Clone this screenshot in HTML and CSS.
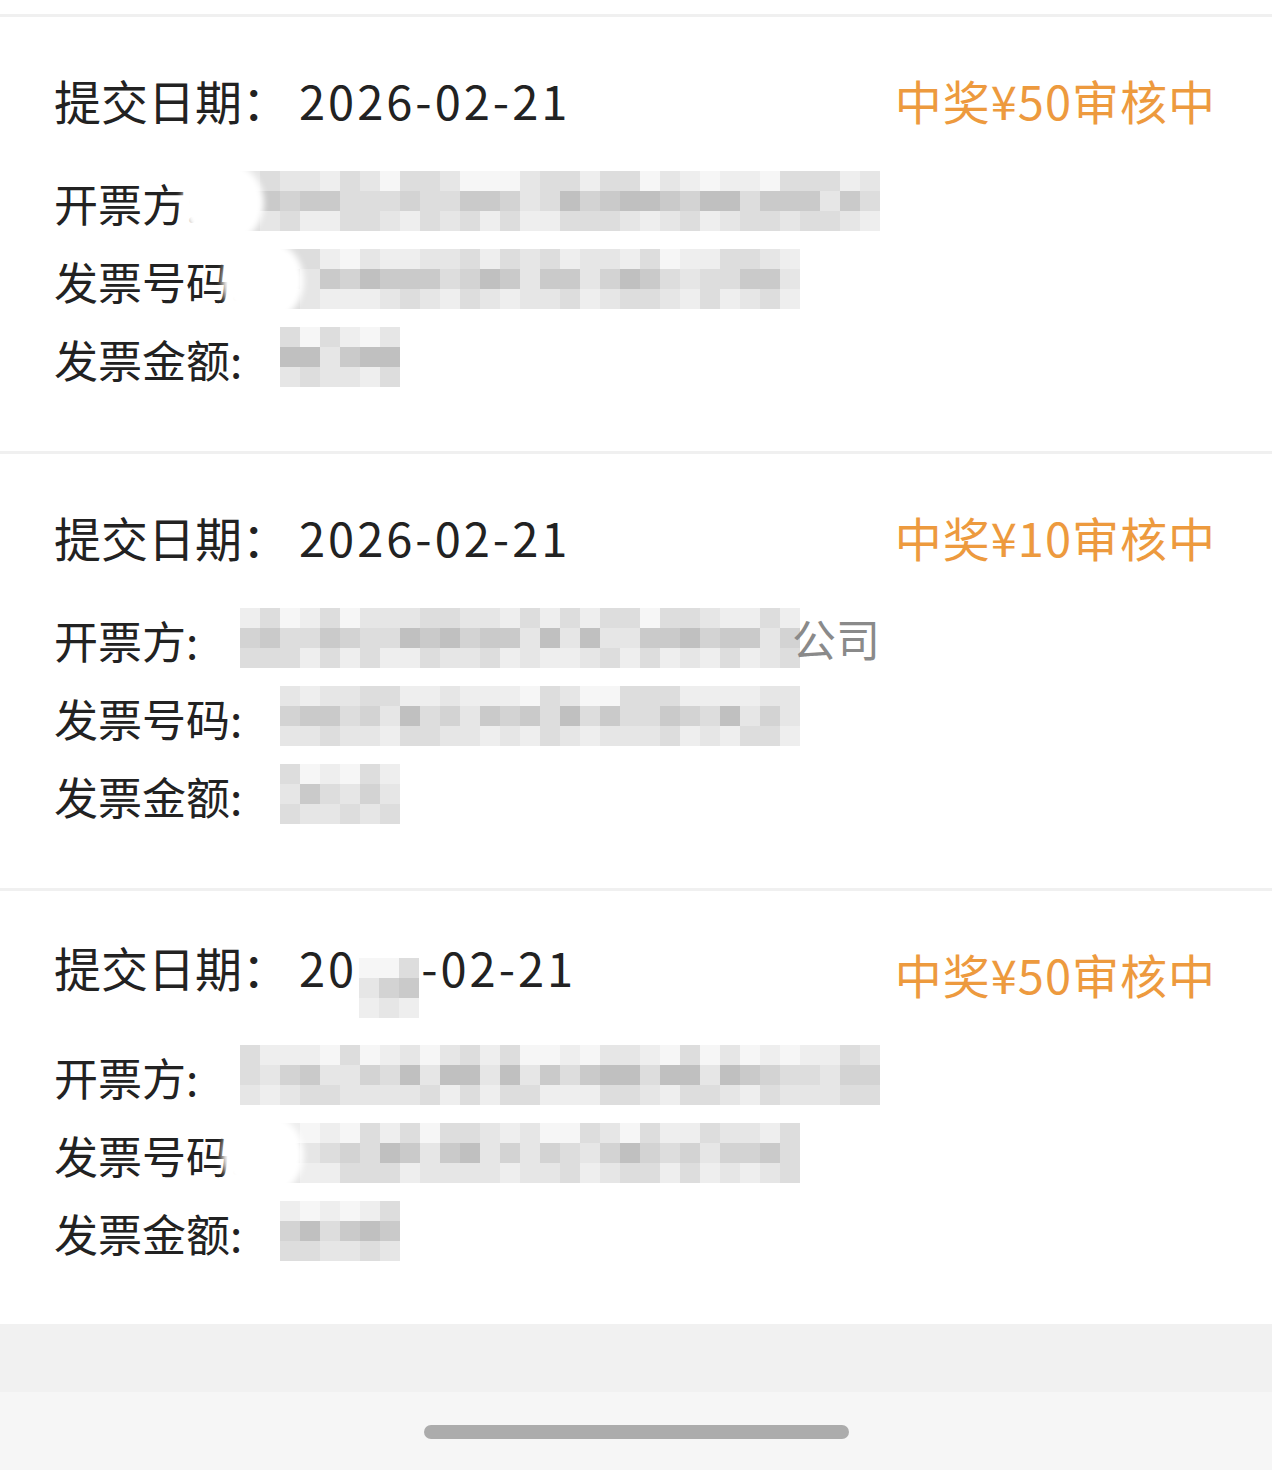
FILE: index.html
```html
<!DOCTYPE html>
<html lang="zh-CN">
<head>
  <meta charset="utf-8">
  <meta name="viewport" content="width=device-width">
  <title>我的发票</title>
  <link rel="stylesheet" href="styles.css">
</head>
<body>
  <div class="top-gap"></div>

  <div class="record">
    <div class="record-head">
      <span class="record-date">提交日期：<span class="num">2026-02-21</span></span>
      <span class="record-status">中奖¥50审核中</span>
    </div>
    <ul class="record-info">
      <li><span class="label">开票方:</span><span class="value wide"><i class="smear"></i><b class="mosaic" data-cols="32" data-seed="3"></b></span></li>
      <li><span class="label">发票号码:</span><span class="value"><i class="smear"></i><b class="mosaic" data-cols="26" data-seed="7"></b></span></li>
      <li><span class="label">发票金额:</span><span class="value"><b class="mosaic" data-cols="6" data-seed="11"></b></span></li>
    </ul>
  </div>

  <div class="record">
    <div class="record-head">
      <span class="record-date">提交日期：<span class="num">2026-02-21</span></span>
      <span class="record-status">中奖¥10审核中</span>
    </div>
    <ul class="record-info">
      <li><span class="label">开票方:</span><span class="value wide"><b class="mosaic" data-cols="28" data-seed="5"></b><span class="tail">公司</span></span></li>
      <li><span class="label">发票号码:</span><span class="value"><b class="mosaic" data-cols="26" data-seed="13"></b></span></li>
      <li><span class="label">发票金额:</span><span class="value"><b class="mosaic" data-cols="6" data-seed="17"></b></span></li>
    </ul>
  </div>

  <div class="record last">
    <div class="record-head">
      <span class="record-date">提交日期：<span class="num">20<b class="mosaic small" data-cols="3" data-seed="19"></b>-02-21</span></span>
      <span class="record-status">中奖¥50审核中</span>
    </div>
    <ul class="record-info">
      <li><span class="label">开票方:</span><span class="value wide"><b class="mosaic" data-cols="32" data-seed="23"></b></span></li>
      <li><span class="label">发票号码:</span><span class="value"><i class="smear"></i><b class="mosaic" data-cols="26" data-seed="29"></b></span></li>
      <li><span class="label">发票金额:</span><span class="value"><b class="mosaic" data-cols="6" data-seed="31"></b></span></li>
    </ul>
  </div>

  <div class="page-bottom"></div>
  <div class="nav-bar"><div class="home-pill"></div></div>

  <script src="script.js"></script>
</body>
</html>
```

FILE: styles.css
```css
* {
  box-sizing: border-box;
}

body {
  margin: 0;
  background: #ffffff;
  color: #222222;
  font-family: "Noto Sans CJK SC", "Noto Sans", sans-serif;
}

.top-gap {
  height: 14px;
}

.record {
  border-top: 3px solid #f0f0f0;
  padding: 53px 54px 50px 54px;
  height: 437px;
}
.record.last {
  height: 436px;
}

.record-head {
  display: flex;
  justify-content: space-between;
  align-items: center;
  height: 60px;
  margin-bottom: 3px;
  font-size: 47px;
  line-height: 60px;
}
.record-date .num {
  display: inline-block;
  margin-left: 10px;
  letter-spacing: 3px;
}
.record-status {
  color: #ed9a3e;
  letter-spacing: 1px;
  margin-right: 2px;
}

.record-info {
  list-style-type: none;
  margin: 34px 0 0 0;
  padding: 0;
}
.record-info li {
  display: flex;
  align-items: center;
  height: 78px;
  font-size: 44px;
  line-height: 78px;
}

.label {
  width: 226px;
}
.value {
  position: relative;
  display: flex;
  align-items: center;
  margin-top: -4px;
}
.value.wide {
  margin-left: -40px;
}
.tail {
  color: #8a8a8a;
  margin-left: -8px;
}

.mosaic {
  display: grid;
  grid-auto-rows: 20px;
  grid-auto-columns: 20px;
}
.mosaic span {
  display: block;
}
.mosaic.small {
  display: inline-grid;
  vertical-align: middle;
  margin: 28px 2px 0 2px;
}

/* white smudge left over from the redaction */
.smear {
  position: absolute;
  left: -58px;
  top: -10px;
  width: 82px;
  height: 84px;
  background: #ffffff;
  border-radius: 50%;
  filter: blur(3px);
}

.page-bottom {
  height: 68px;
  background: #f1f1f1;
}
.nav-bar {
  height: 79px;
  background: #f6f6f6;
  padding-top: 33px;
}
.home-pill {
  width: 425px;
  height: 14px;
  margin: 0 auto;
  border-radius: 7px;
  background: #acacac;
}
```

FILE: script.js
```js
var shades = ['#f6f6f6', '#eeeeee', '#e6e6e6', '#dddddd', '#d3d3d3', '#cacaca', '#c0c0c0'];

function rand(n) {
  var x = Math.sin(n * 12.9898 + 78.233) * 43758.5453;
  return x - Math.floor(x);
}

function paintMosaic(el) {
  var cols = parseInt(el.getAttribute('data-cols'), 10);
  var seed = parseInt(el.getAttribute('data-seed'), 10) * 100;
  el.style.gridTemplateColumns = 'repeat(' + cols + ', 20px)';
  for (var r = 0; r < 3; r++) {
    for (var c = 0; c < cols; c++) {
      var v = rand(seed + r * 50 + c);
      var idx;
      if (r == 1) idx = 2 + Math.floor(v * 5);
      else if (r == 0) idx = Math.floor(v * 4);
      else idx = 1 + Math.floor(v * 3);
      var cell = document.createElement('span');
      cell.style.background = shades[idx];
      el.appendChild(cell);
    }
  }
}

var list = document.querySelectorAll('.mosaic');
for (var i = 0; i < list.length; i++) {
  paintMosaic(list[i]);
}
```
